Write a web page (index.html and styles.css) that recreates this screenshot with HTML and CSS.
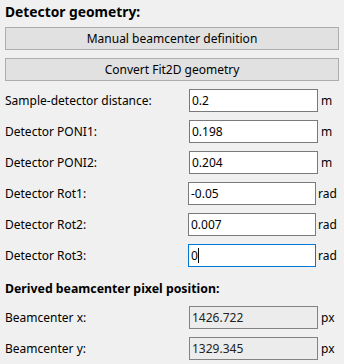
FILE: index.html
```html
<!DOCTYPE html>
<html>
<head>
    <title>Detector geometry</title>
    <link rel="stylesheet" href="styles.css">
</head>
<body>
    <div class="panel">
        <div class="heading">Detector geometry:</div>

        <button class="btn">Manual beamcenter definition</button>
        <button class="btn">Convert Fit2D geometry</button>

        <div class="row">
            <label class="label">Sample-detector distance:</label>
            <input class="field" type="text" value="0.2">
            <span class="unit">m</span>
        </div>
        <div class="row">
            <label class="label">Detector PONI1:</label>
            <input class="field" type="text" value="0.198">
            <span class="unit">m</span>
        </div>
        <div class="row">
            <label class="label">Detector PONI2:</label>
            <input class="field" type="text" value="0.204">
            <span class="unit">m</span>
        </div>
        <div class="row wide-unit">
            <label class="label">Detector Rot1:</label>
            <input class="field" type="text" value="-0.05">
            <span class="unit">rad</span>
        </div>
        <div class="row wide-unit">
            <label class="label">Detector Rot2:</label>
            <input class="field" type="text" value="0.007">
            <span class="unit">rad</span>
        </div>
        <div class="row wide-unit">
            <label class="label">Detector Rot3:</label>
            <span class="field-wrap">
                <input class="field focused" type="text" value="0">
                <span class="caret"></span>
            </span>
            <span class="unit">rad</span>
        </div>

        <div class="heading sub">Derived beamcenter pixel position:</div>

        <div class="row">
            <label class="label">Beamcenter x:</label>
            <input class="field readonly" type="text" value="1426.722" readonly>
            <span class="unit">px</span>
        </div>
        <div class="row">
            <label class="label">Beamcenter y:</label>
            <input class="field readonly" type="text" value="1329.345" readonly>
            <span class="unit">px</span>
        </div>
    </div>
</body>
</html>
```
FILE: styles.css
```css
body {
    margin: 0;
    background-color: #f0f0f0;
    font-family: "Noto Sans", sans-serif;
    font-size: 12px;
    color: #000;
}
.panel {
    display: flex;
    flex-direction: column;
    gap: 8px;
    padding: 0 5px;
}
.heading {
    height: 19px;
    padding-top: 4px;
    line-height: 15px;
    box-sizing: border-box;
    font-size: 13.8px;
    font-weight: bold;
}
.heading.sub {
    height: 23px;
    padding-top: 4px;
    line-height: 19px;
    font-size: 12.3px;
}
.btn {
    height: 23px;
    padding: 1px 0 0 0;
    font-family: inherit;
    font-size: 12px;
    color: #000;
    background-color: #e1e1e1;
    border: 1px solid #adadad;
    line-height: 20px;
}
.row {
    display: flex;
    align-items: center;
    height: 23px;
    line-height: 23px;
}
.label {
    flex: 1;
    white-space: nowrap;
}
.field {
    box-sizing: border-box;
    width: 129px;
    height: 23px;
    margin: 0;
    padding: 0 2px;
    font-family: inherit;
    font-size: 12px;
    color: #000;
    background-color: #fff;
    border: 1px solid #7a7a7a;
    outline: none;
}
.unit {
    width: 18px;
    margin-left: 3px;
}
.wide-unit .field {
    width: 128px;
}
.wide-unit .unit {
    width: 21px;
    margin-left: 2px;
}
.field.focused {
    border-color: #0078d7;
}
.field.readonly {
    background-color: #ececec;
    border-color: #838383;
    color: #222;
}
.field-wrap {
    position: relative;
    display: flex;
}
.caret {
    position: absolute;
    left: 10px;
    top: 4px;
    width: 1px;
    height: 15px;
    background-color: #000;
}
```
